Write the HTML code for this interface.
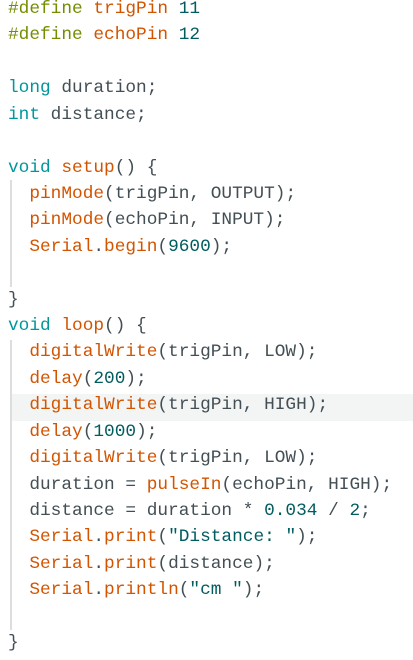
<!DOCTYPE html><html><head><style>
body{margin:0;width:413px;height:660px;background:#fff;overflow:hidden;position:relative;font-family:"Liberation Mono",monospace;font-size:17.8px;color:#434f54}
pre{margin:0;position:absolute;left:8px;top:-4px;font:inherit;line-height:26.42px;white-space:pre}
.d{color:#728e00}.k{color:#00979c}.f{color:#d35400}.n{color:#005c5f}
.g{position:absolute;left:10px;width:2px;background:#ddd}
.hl{position:absolute;left:11px;right:0;top:394px;height:27px;background:#f3f4f4}
</style></head><body>
<div class="hl"></div>
<div class="g" style="top:180px;height:107px"></div>
<div class="g" style="top:340px;height:290px"></div>
<pre><span class="d">#define</span> <span class="f">trigPin</span> <span class="n">11</span>
<span class="d">#define</span> <span class="f">echoPin</span> <span class="n">12</span>

<span class="k">long</span> duration;
<span class="k">int</span> distance;

<span class="k">void</span> <span class="f">setup</span>() {
  <span class="f">pinMode</span>(trigPin, OUTPUT);
  <span class="f">pinMode</span>(echoPin, INPUT);
  <span class="f">Serial</span>.<span class="f">begin</span>(<span class="n">9600</span>);

}
<span class="k">void</span> <span class="f">loop</span>() {
  <span class="f">digitalWrite</span>(trigPin, LOW);
  <span class="f">delay</span>(<span class="n">200</span>);
  <span class="f">digitalWrite</span>(trigPin, HIGH);
  <span class="f">delay</span>(<span class="n">1000</span>);
  <span class="f">digitalWrite</span>(trigPin, LOW);
  duration = <span class="f">pulseIn</span>(echoPin, HIGH);
  distance = duration * <span class="n">0.034</span> / <span class="n">2</span>;
  <span class="f">Serial</span>.<span class="f">print</span>(<span class="n">"Distance: "</span>);
  <span class="f">Serial</span>.<span class="f">print</span>(distance);
  <span class="f">Serial</span>.<span class="f">println</span>(<span class="n">"cm "</span>);

}</pre>
</body></html>
